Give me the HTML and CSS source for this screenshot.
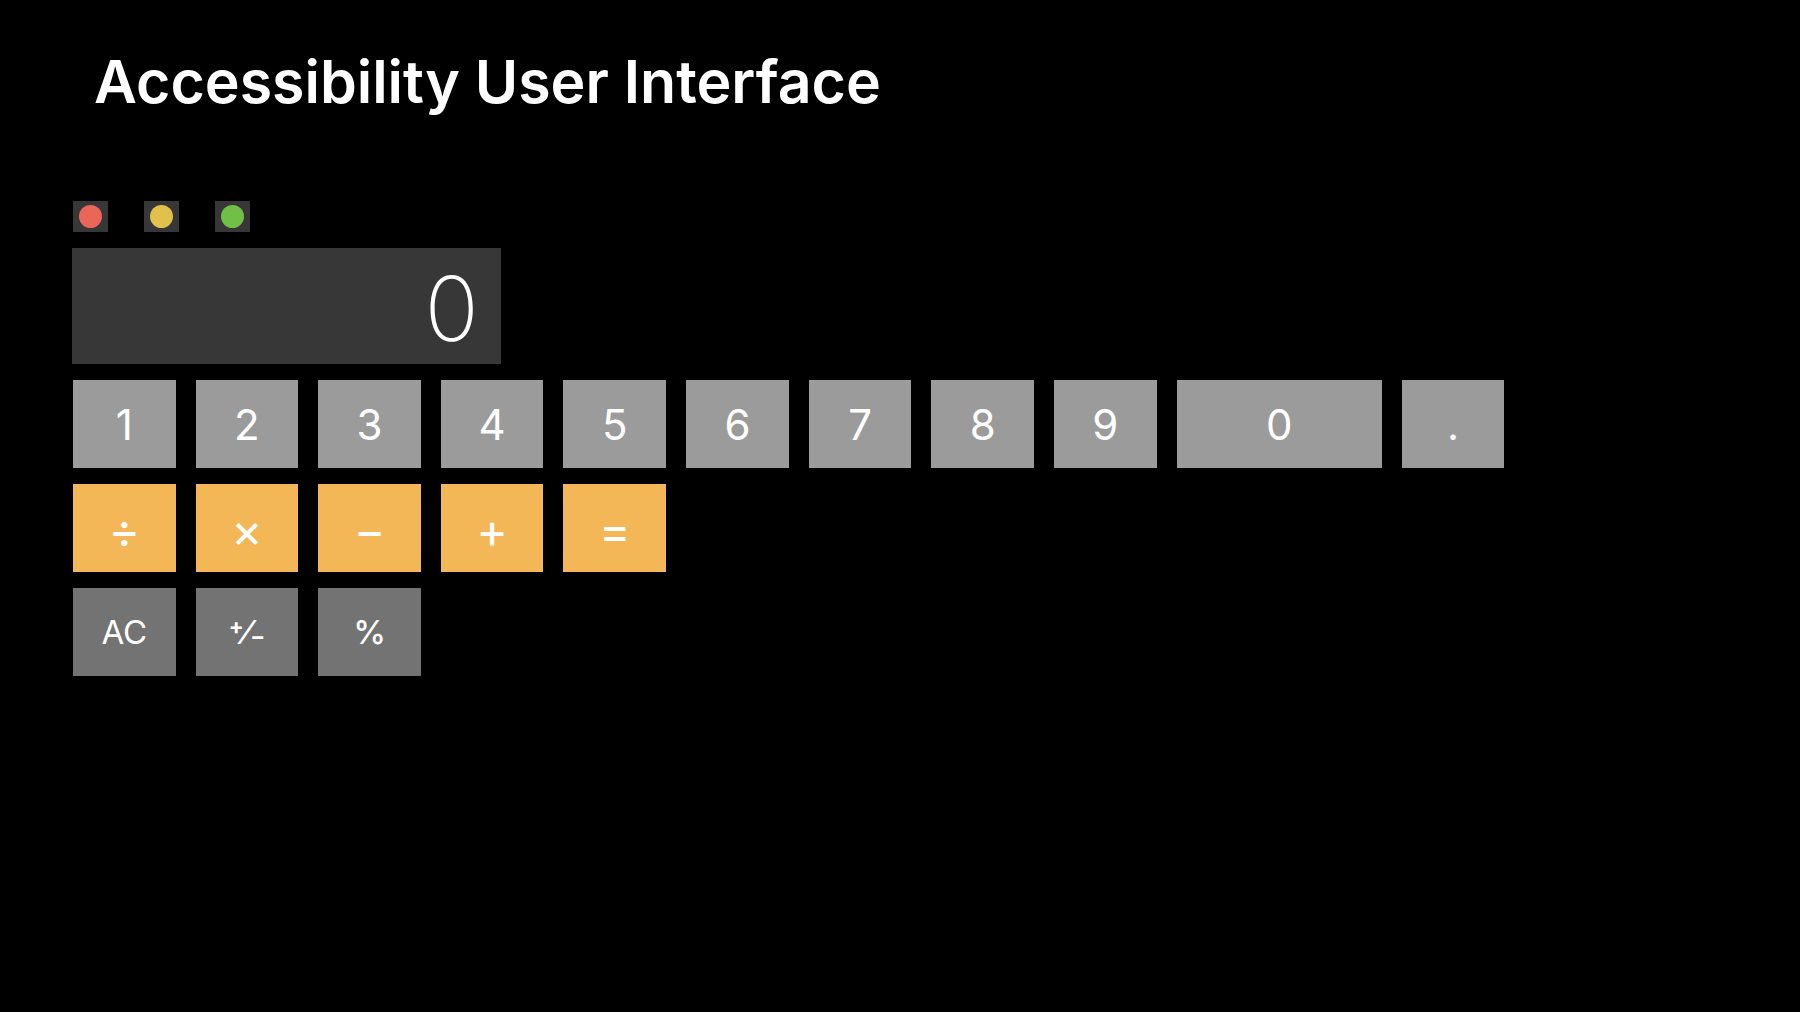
FILE: index.html
```
<!DOCTYPE html>
<html lang="en">
<head>
    <meta charset="UTF-8">
    <meta name="viewport" content="width=device-width, initial-scale=1.0">
    <title>Accessibility User Interface</title>
    <link rel="stylesheet" href="styles.css">
</head>
<body>
    <h1>Accessibility User Interface</h1>

    <main class="calculator">
        <div class="window-buttons">
            <button class="window-button" type="button" aria-label="Close"><span class="dot red"></span></button>
            <button class="window-button" type="button" aria-label="Minimize"><span class="dot yellow"></span></button>
            <button class="window-button" type="button" aria-label="Zoom"><span class="dot green"></span></button>
        </div>

        <input class="display" type="text" value="0" aria-label="Result" readonly>

        <!-- digits -->
        <div class="keys">
            <button class="key" type="button">1</button>
            <button class="key" type="button">2</button>
            <button class="key" type="button">3</button>
            <button class="key" type="button">4</button>
            <button class="key" type="button">5</button>
            <button class="key" type="button">6</button>
            <button class="key" type="button">7</button>
            <button class="key" type="button">8</button>
            <button class="key" type="button">9</button>
            <button class="key" type="button">0</button>
            <button class="key" type="button">.</button>
        </div>

        <!-- operators -->
        <div class="keys">
            <button class="key operator" type="button">÷</button>
            <button class="key operator" type="button">×</button>
            <button class="key operator" type="button">−</button>
            <button class="key operator" type="button">+</button>
            <button class="key operator" type="button">=</button>
        </div>

        <!-- functions -->
        <div class="keys">
            <button class="key function" type="button">AC</button>
            <button class="key function bold" type="button"><sup class="sign">+</sup>⁄<sub class="sign">−</sub></button>
            <button class="key function bold" type="button">%</button>
        </div>
    </main>
</body>
</html>
```
FILE: styles.css
```
* {
    box-sizing: border-box;
}
body {
    margin: 0;
    padding: 44px 72px;
    background-color: #000;
    color: #fff;
    font-family: Inter, "Liberation Sans", sans-serif;
}
h1 {
    margin: 0 0 82px;
    padding-left: 22px;
    font-size: 59px;
    font-weight: 600;
    line-height: 75px;
}
.calculator {
    display: flex;
    flex-direction: column;
    gap: 16px;
}
.window-buttons {
    display: flex;
    gap: 36px;
    padding-left: 1px;
}
button, input {
    margin: 0;
    padding: 0;
    border: 0;
    border-radius: 0;
    color: inherit;
    font-family: inherit;
}
.window-button {
    display: flex;
    align-items: center;
    justify-content: center;
    width: 35px;
    height: 31px;
    background-color: #373737;
}
.dot {
    width: 23px;
    height: 23px;
    border-radius: 50%;
}
.red {
    background-color: #ec6559;
}
.yellow {
    background-color: #e1c04c;
}
.green {
    background-color: #71bf46;
}
.display {
    width: 25.9%;
    height: 116px;
    padding: 4px 22px 0 0;
    background-color: #373737;
    font-size: 90px;
    font-weight: 200;
    text-align: right;
}
.keys {
    display: grid;
    grid-template-columns: repeat(9, 1fr) 2fr 1fr;
    column-gap: 20px;
    width: 86.5%;
    padding-left: 1px;
}
.key {
    height: 88px;
    background-color: #9b9b9b;
    font-size: 42px;
    font-weight: 400;
}
.operator {
    padding-top: 4px;
    background-color: #f3b758;
    font-size: 48px;
}
.function {
    background-color: #737373;
    font-size: 33px;
}
.bold {
    font-weight: 500;
}
.sign {
    font-size: 22px;
    font-weight: 700;
    line-height: 0;
}
sup.sign {
    vertical-align: 10px;
}
sub.sign {
    vertical-align: 0;
}
```
